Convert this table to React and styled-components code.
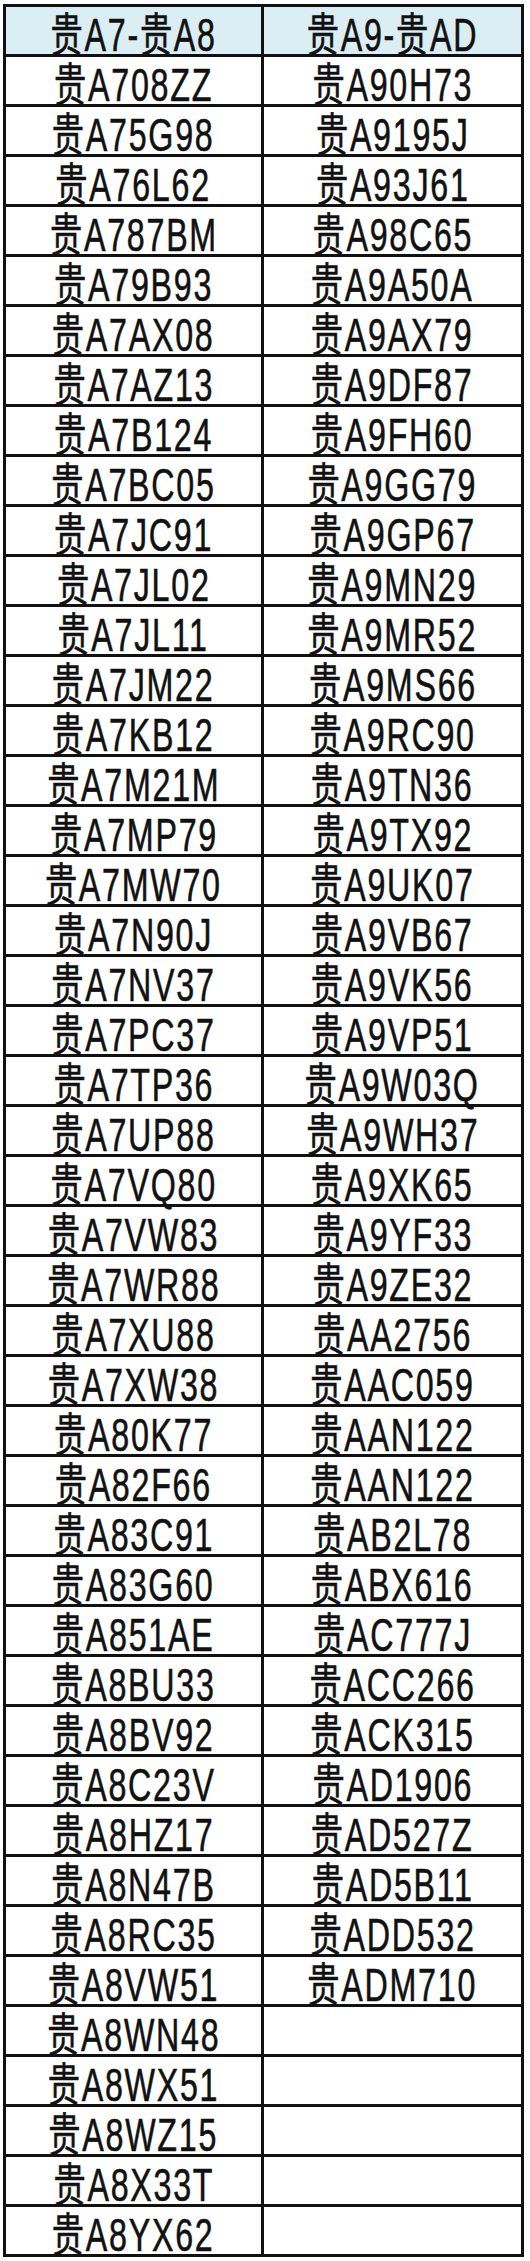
import styled, { createGlobalStyle } from "styled-components";

const GlobalStyle = createGlobalStyle`
	html, body {
		margin: 0;
		padding: 0;
		background: #fff;
	}
`;

const Page = styled.div`
	padding: 4px 0 4px 3px;
`;

const Sheet = styled.div`
	display: grid;
	grid-template-columns: 255px 257px;
	grid-auto-rows: 47px;
	gap: 3px;
	padding: 3px;
	width: max-content;
	background: #111;
`;

const Cell = styled.div`
	display: flex;
	align-items: flex-start;
	justify-content: center;
	padding-top: 9px;
	box-sizing: border-box;
	background: ${(props) => (props.$head ? "#daeef3" : "#fff")};
	color: #111;
	font-family: "Liberation Sans", "Noto Sans CJK SC", sans-serif;
	font-size: 46px;
	white-space: nowrap;
`;

// the sheet's font is a condensed one; squeeze the line to match
const Plate = styled.span`
	display: inline-block;
	line-height: 38px;
	letter-spacing: 2.5px;
	transform: scaleX(0.7);
	transform-origin: center;
	-webkit-text-stroke: 0.6px #111;
`;

const left = [
	"A708ZZ", "A75G98", "A76L62", "A787BM", "A79B93", "A7AX08", "A7AZ13", "A7B124",
	"A7BC05", "A7JC91", "A7JL02", "A7JL11", "A7JM22", "A7KB12", "A7M21M", "A7MP79",
	"A7MW70", "A7N90J", "A7NV37", "A7PC37", "A7TP36", "A7UP88", "A7VQ80", "A7VW83",
	"A7WR88", "A7XU88", "A7XW38", "A80K77", "A82F66", "A83C91", "A83G60", "A851AE",
	"A8BU33", "A8BV92", "A8C23V", "A8HZ17", "A8N47B", "A8RC35", "A8VW51", "A8WN48",
	"A8WX51", "A8WZ15", "A8X33T", "A8YX62",
];

const right = [
	"A90H73", "A9195J", "A93J61", "A98C65", "A9A50A", "A9AX79", "A9DF87", "A9FH60",
	"A9GG79", "A9GP67", "A9MN29", "A9MR52", "A9MS66", "A9RC90", "A9TN36", "A9TX92",
	"A9UK07", "A9VB67", "A9VK56", "A9VP51", "A9W03Q", "A9WH37", "A9XK65", "A9YF33",
	"A9ZE32", "AA2756", "AAC059", "AAN122", "AAN122", "AB2L78", "ABX616", "AC777J",
	"ACC266", "ACK315", "AD1906", "AD527Z", "AD5B11", "ADD532", "ADM710",
];

export default function App() {
	return (
		<Page>
			<GlobalStyle />
			<Sheet>
				<Cell $head><Plate>贵A7-贵A8</Plate></Cell>
				<Cell $head><Plate>贵A9-贵AD</Plate></Cell>
				{left.map((plate, i) => [
					<Cell key={"l" + i}><Plate>贵{plate}</Plate></Cell>,
					<Cell key={"r" + i}>{right[i] ? <Plate>贵{right[i]}</Plate> : null}</Cell>,
				])}
			</Sheet>
		</Page>
	);
}
